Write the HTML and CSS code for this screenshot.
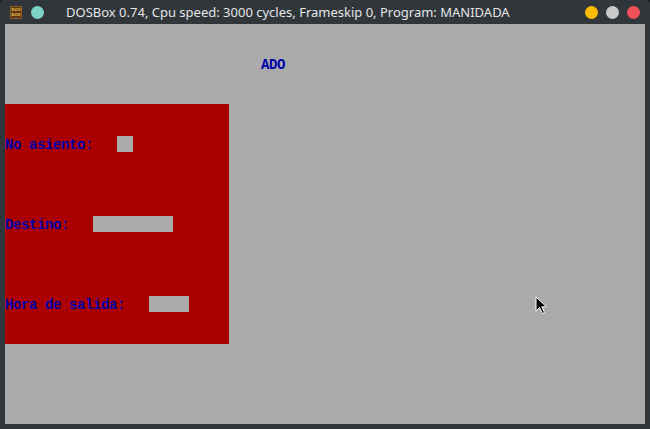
FILE: index.html
```html
<!DOCTYPE html>
<html lang="es">
<head>
<meta charset="utf-8">
<title>DOSBox</title>
<link rel="stylesheet" href="styles.css">
</head>
<body>
<div class="window">
  <div class="titlebar">
    <div class="appicon"><span>DOS</span><span>BOX</span></div>
    <div class="dot teal"></div>
    <div class="title">DOSBox 0.74, Cpu speed: 3000 cycles, Frameskip 0, Program: MANIDADA</div>
    <div class="controls">
      <div class="dot yellow"></div>
      <div class="dot grey"></div>
      <div class="dot red"></div>
    </div>
  </div>
  <div class="screen">
    <div class="heading"><span class="txt">ADO</span></div>
    <div class="panel">
      <div class="line"><span class="txt">No asiento:</span><span class="field w2"></span></div>
      <div class="line"><span class="txt">Destino:</span><span class="field w10"></span></div>
      <div class="line"><span class="txt">Hora de salida:</span><span class="field w5"></span></div>
    </div>
    <svg class="cursor" width="13" height="19" viewBox="0 0 13 19">
      <path d="M1 1 L1 15 L4.5 11.5 L7.5 17.5 L9.5 16.5 L6.8 10.8 L11.5 10.8 Z" fill="#000" stroke="#fff" stroke-width="1" stroke-linejoin="miter"/>
    </svg>
  </div>
</div>
</body>
</html>
```
FILE: styles.css
```css
html, body {
  margin: 0;
  padding: 0;
  background: #1b1e20;
}

.window {
  width: 650px;
  height: 429px;
  background: #31363b;
  border-radius: 4px 4px 0 0;
  display: flex;
  flex-direction: column;
  box-sizing: border-box;
  overflow: hidden;
}

.titlebar {
  height: 24px;
  display: flex;
  align-items: center;
  padding: 0 4px 0 10px;
  font-family: "Noto Sans", sans-serif;
  font-size: 13px;
  color: #e3e5e7;
}

.appicon {
  width: 12px;
  height: 13px;
  background: #5a3712;
  border: 1px solid #8a5a20;
  box-sizing: border-box;
  display: flex;
  flex-direction: column;
  align-items: center;
  justify-content: center;
  font-family: "DejaVu Sans", sans-serif;
  font-size: 4px;
  font-weight: bold;
  line-height: 5px;
  color: #e2b44a;
}

.dot {
  width: 13px;
  height: 13px;
  border-radius: 50%;
}

.teal {
  background: #7dd3c8;
  margin-left: 9px;
}

.title {
  margin-left: 22px;
  flex: 1;
  white-space: nowrap;
}

.controls {
  display: flex;
  gap: 8px;
  margin-right: 6px;
}

.yellow { background: #fcbc05; }
.grey { background: #c9c9c9; }
.red { background: #f05058; }

.screen {
  position: relative;
  margin: 0 5px;
  width: 640px;
  height: 400px;
  background: #aaaaaa;
  font-family: "Liberation Mono", monospace;
  font-size: 14px;
  letter-spacing: -0.4px;
  font-weight: bold;
  line-height: 16px;
  color: #0000aa;
}

.txt {
  display: block;
  height: 16px;
  line-height: 18px;
  white-space: pre;
}

.heading {
  padding-top: 32px;
  padding-left: 256px;
  height: 16px;
}

.panel {
  margin-top: 32px;
  width: 224px;
  background: #aa0000;
  padding: 32px 0;
  display: flex;
  flex-direction: column;
  gap: 64px;
}

.line {
  height: 16px;
  display: flex;
}

.field {
  margin-left: 24px;
  height: 16px;
  background: #aaaaaa;
}

.w2 { width: 16px; }
.w10 { width: 80px; }
.w5 { width: 40px; }

.cursor {
  position: absolute;
  left: 530px;
  top: 272px;
}
```
